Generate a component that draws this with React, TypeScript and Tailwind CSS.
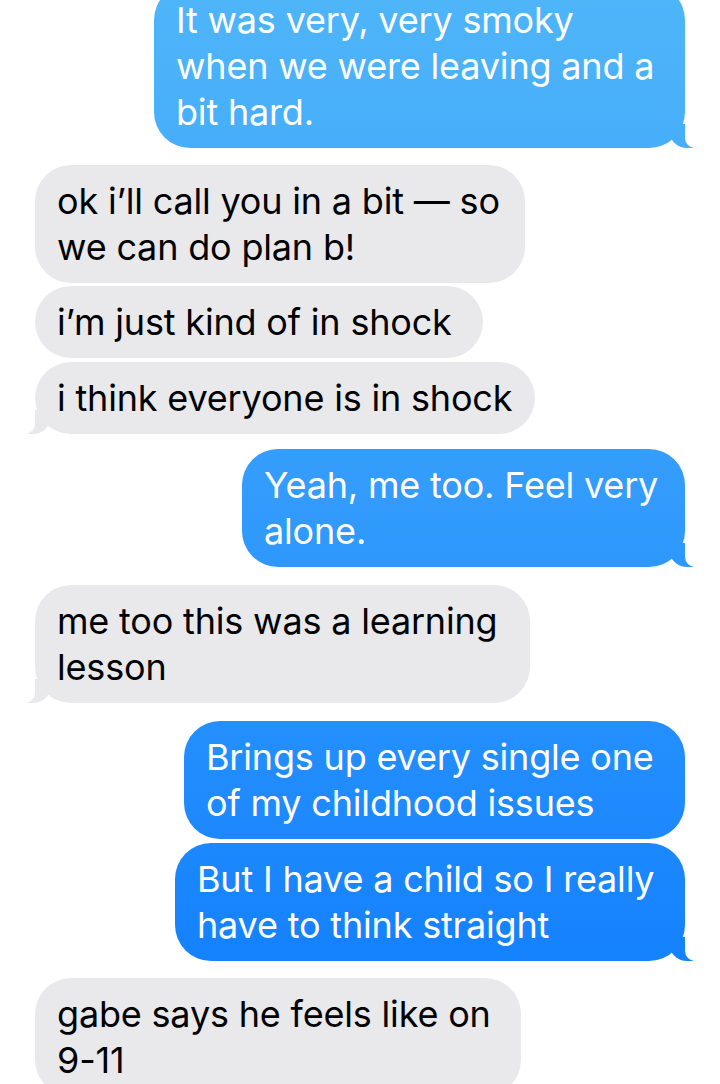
type Message = {
  fromMe: boolean;
  lines: string[];
  width: number;
  tail?: boolean;
  gap: string;
};

const messages: Message[] = [
  { fromMe: true, lines: ['It was very, very smoky', 'when we were leaving and a', 'bit hard.'], width: 531, tail: true, gap: '-mt-[16px]' },
  { fromMe: false, lines: ['ok i’ll call you in a bit — so', 'we can do plan b!'], width: 490, gap: 'mt-[17px]' },
  { fromMe: false, lines: ['i’m just kind of in shock'], width: 448, gap: 'mt-[3px]' },
  { fromMe: false, lines: ['i think everyone is in shock'], width: 500, tail: true, gap: 'mt-[4px]' },
  { fromMe: true, lines: ['Yeah, me too. Feel very', 'alone.'], width: 443, tail: true, gap: 'mt-[15px]' },
  { fromMe: false, lines: ['me too this was a learning', 'lesson'], width: 495, tail: true, gap: 'mt-[18px]' },
  { fromMe: true, lines: ['Brings up every single one', 'of my childhood issues'], width: 501, gap: 'mt-[18px]' },
  { fromMe: true, lines: ['But I have a child so I really', 'have to think straight'], width: 510, tail: true, gap: 'mt-[4px]' },
  { fromMe: false, lines: ['gabe says he feels like on', '9-11'], width: 486, gap: 'mt-[17px]' },
];

const blue = 'bg-linear-to-b from-[#4fb5f9] to-[#0a7afe] bg-fixed';

function Bubble({ msg }: { msg: Message }) {
  const color = msg.fromMe ? `${blue} text-white` : 'bg-[#e9e9eb] text-black';
  return (
    <div className={`flex ${msg.fromMe ? 'justify-end' : 'justify-start'} ${msg.gap}`}>
      <div
        className={`relative rounded-[36px] py-[13px] pl-[22px] ${color}`}
        style={{ width: msg.width }}
      >
        {msg.lines.map((line) => (
          <div key={line} className="whitespace-nowrap">
            {line}
          </div>
        ))}

        {/* iMessage tail */}
        {msg.tail && msg.fromMe && (
          <>
            <div className={`absolute bottom-0 right-[-8px] h-[24px] w-[24px] rounded-bl-[18px] ${blue}`} />
            <div className="absolute bottom-0 right-[-12px] h-[26px] w-[12px] rounded-bl-[10px] bg-white" />
          </>
        )}
        {msg.tail && !msg.fromMe && (
          <>
            <div className="absolute bottom-0 left-[-8px] h-[24px] w-[24px] rounded-br-[18px] bg-[#e9e9eb]" />
            <div className="absolute bottom-0 left-[-12px] h-[26px] w-[12px] rounded-br-[10px] bg-white" />
          </>
        )}
      </div>
    </div>
  );
}

export default function App() {
  return (
    <div
      className="h-[1084px] overflow-hidden bg-white px-[35px] text-[36px] leading-[46px] tracking-[-0.005em]"
      style={{ fontFamily: 'Inter, "Noto Sans", sans-serif' }}
    >
      <div className="flex flex-col">
        {messages.map((msg, i) => (
          <Bubble key={i} msg={msg} />
        ))}
      </div>
    </div>
  );
}
